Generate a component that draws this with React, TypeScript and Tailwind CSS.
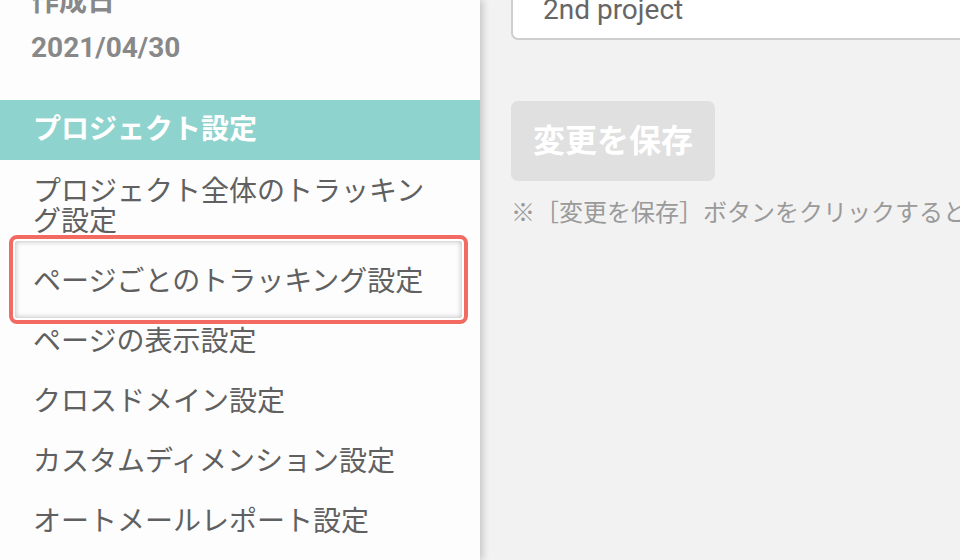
import React from 'react'

const menuItems = [
  { label: 'プロジェクト設定', active: true },
  { label: 'プロジェクト全体のトラッキング設定' },
  { label: 'ページごとのトラッキング設定', highlighted: true },
  { label: 'ページの表示設定' },
  { label: 'クロスドメイン設定' },
  { label: 'カスタムディメンション設定' },
  { label: 'オートメールレポート設定' },
]

function Sidebar() {
  return (
    <aside className="relative z-10 w-[480px] shrink-0 bg-[#fdfdfd] shadow-[3px_0_7px_rgba(0,0,0,0.18)]">
      <div className="px-[31px]">
        <p className="mt-[-13px] text-[28px] leading-[30px] font-bold text-[#888]">作成日</p>
        <p className="mt-[16px] text-[28px] leading-[30px] font-bold text-[#888]">2021/04/30</p>
      </div>
      <nav className="mt-[37px] flex flex-col">
        {menuItems.map((item) => (
          <div
            key={item.label}
            className={
              item.active
                ? 'relative px-[33px] py-[15px] text-[28px] leading-[30px] font-bold text-white bg-[#8fd3ce]'
                : 'relative pl-[33px] pr-[50px] pt-[17px] pb-[13px] text-[28px] leading-[30px] text-[#606060]'
            }
          >
            {item.label}
            {item.highlighted && (
              <span className="pointer-events-none absolute left-[9px] right-[12px] top-[-15px] bottom-[-14px] rounded-[8px] border-[4px] border-[#f36a62] shadow-[0_0_0_2px_#ffffff,inset_0_0_0_2px_#ffffff,inset_0_0_5px_3px_rgba(0,0,0,0.22)]" />
            )}
          </div>
        ))}
      </nav>
    </aside>
  )
}

function Content() {
  return (
    <main className="flex-1 min-w-0 overflow-hidden bg-[#f2f2f2] pl-[31px]">
      <div className="mt-[-20px] h-[60px] flex items-center rounded-l-[7px] border-2 border-r-0 border-[#cfcfcf] bg-white pl-[30px] text-[28px] text-[#666]">
        2nd project
      </div>
      <button
        disabled
        className="mt-[61px] h-[80px] rounded-[7px] bg-[#e0e0e0] px-[22px] text-[32px] font-bold text-white"
      >
        変更を保存
      </button>
      <p className="mt-[17px] whitespace-nowrap text-[24px] leading-[30px] text-[#9a9a9a]">
        ※［変更を保存］ボタンをクリックすると設定が反映されます。
      </p>
    </main>
  )
}

export default function App() {
  return (
    <div className="flex h-[560px] w-[960px] overflow-hidden font-['Roboto','Noto_Sans_CJK_JP',sans-serif]">
      <Sidebar />
      <Content />
    </div>
  )
}
